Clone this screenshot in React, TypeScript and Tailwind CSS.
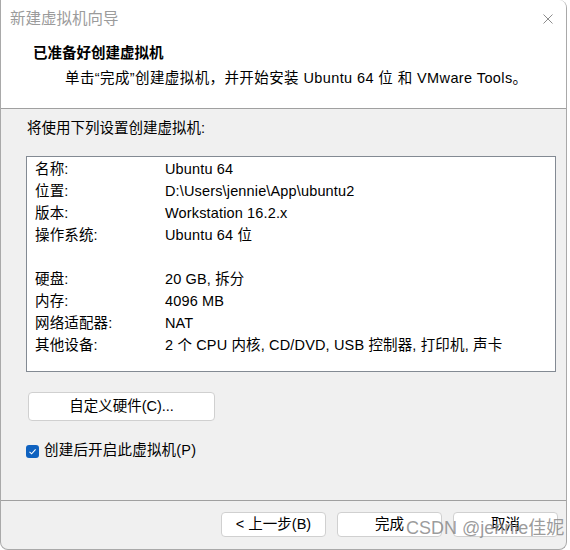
const font = "font-['Liberation_Sans','Noto_Sans_CJK_SC',sans-serif]"

const rows: [string, string][] = [
  ['名称:', 'Ubuntu 64'],
  ['位置:', 'D:\\Users\\jennie\\App\\ubuntu2'],
  ['版本:', 'Workstation 16.2.x'],
  ['操作系统:', 'Ubuntu 64 位'],
  ['', ''],
  ['硬盘:', '20 GB, 拆分'],
  ['内存:', '4096 MB'],
  ['网络适配器:', 'NAT'],
  ['其他设备:', '2 个 CPU 内核, CD/DVD, USB 控制器, 打印机, 声卡'],
]

function WinButton({ label, className = '' }: { label: string; className?: string }) {
  return (
    <button
      className={`flex items-center justify-center bg-white border border-[#d0d0d0] rounded-[4px] text-[14.5px] text-black ${className}`}
    >
      {label}
    </button>
  )
}

export default function App() {
  return (
    <div className={`w-[570px] h-[550px] bg-white ${font}`}>
      <div className="relative w-[567px] h-[550px] flex flex-col border-l border-r border-b border-[#a9a9a9] rounded-tr-[8px] rounded-b-[8px] overflow-hidden bg-[#f0f0f0]">
        {/* header */}
        <div className="bg-white h-[109px] border-b border-[#a0a0a0] shrink-0">
          <div className="h-[38px] flex items-center justify-between pl-[9px] pr-[13px]">
            <span className="text-[15.5px] text-[#9b9b9b]">新建虚拟机向导</span>
            <svg width="10" height="10" viewBox="0 0 10 10" className="text-[#8c8c8c]">
              <path d="M0.5 0.5 L9.5 9.5 M9.5 0.5 L0.5 9.5" stroke="currentColor" strokeWidth="1" />
            </svg>
          </div>
          <div className="mt-[6px] h-[20px] flex items-center pl-[32px] text-[14.5px] font-bold text-black">
            已准备好创建虚拟机
          </div>
          <div className="mt-[5px] h-[20px] flex items-center pl-[64px] text-[14.5px] tracking-[0.4px] text-black">
            单击“完成”创建虚拟机，并开始安装 Ubuntu 64 位 和 VMware Tools。
          </div>
        </div>

        {/* body */}
        <div className="h-[392px] shrink-0 border-b border-[#a0a0a0] pl-[25px] pt-[10px]">
          <div className="h-[20px] flex items-center pl-[1px] text-[14.5px] text-black">
            将使用下列设置创建虚拟机:
          </div>
          <div className="mt-[17px] w-[530px] h-[216px] bg-white border border-[#838a93] pt-[2px] pl-[8px]">
            {rows.map(([k, v], i) => (
              <div key={i} className="h-[22px] flex items-center text-[14.5px] tracking-[0.15px] text-black">
                <span className="w-[130px] shrink-0">{k}</span>
                <span>{v}</span>
              </div>
            ))}
          </div>
          <WinButton label="自定义硬件(C)..." className="mt-[20px] ml-[2px] w-[187px] h-[29px]" />
          <div className="mt-[20px] h-[20px] flex items-center gap-[5px] text-[14.5px] tracking-[0.2px] text-black">
            <span className="w-[13px] h-[13px] rounded-[3px] bg-[#0f62c0] flex items-center justify-center">
              <svg width="9" height="9" viewBox="0 0 9 9">
                <path d="M1.5 4.8 L3.6 6.8 L7.6 2.3" fill="none" stroke="white" strokeWidth="1.1" />
              </svg>
            </span>
            <span>创建后开启此虚拟机(P)</span>
          </div>
        </div>

        {/* footer */}
        <div className="flex-1 flex justify-end gap-[11px] pt-[11px] pr-[8px]">
          <WinButton label="< 上一步(B)" className="w-[105px] h-[25px]" />
          <WinButton label="完成" className="w-[105px] h-[25px]" />
          <WinButton label="取消" className="w-[105px] h-[25px]" />
        </div>

        <div className="absolute left-[405px] top-[515px] text-[18px] text-[#8a8a8a]/85 pointer-events-none">
          CSDN @jennie佳妮
        </div>
      </div>
    </div>
  )
}
